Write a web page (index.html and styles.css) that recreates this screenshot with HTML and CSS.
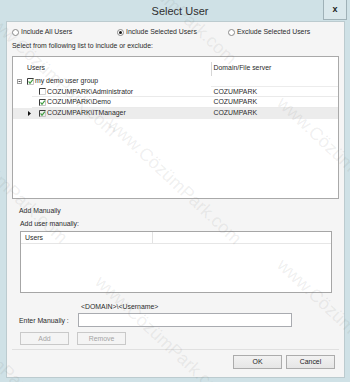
FILE: index.html
```html
<!DOCTYPE html>
<html>
<head>
<meta charset="utf-8">
<link rel="stylesheet" href="styles.css">
</head>
<body>
<div class="window">
  <div class="titlebar">
    <div class="title">Select User</div>
    <div class="close">x</div>
  </div>
  <div class="client">
    <div class="radios">
      <div class="radio"><span class="rb"></span>Include All Users</div>
      <div class="radio"><span class="rb on"></span>Include Selected Users</div>
      <div class="radio"><span class="rb"></span>Exclude Selected Users</div>
    </div>
    <div class="hint">Select from following list to include or exclude:</div>
    <div class="tree">
      <div class="thead">
        <div class="h1">Users</div>
        <div class="h2">Domain/File server</div>
      </div>
      <div class="trow r-group">
        <div class="cell1 lvl0">
          <svg class="exp" viewBox="0 0 5 5"><rect x="0.5" y="0.5" width="4" height="4" fill="#fff" stroke="#9c9c9c"/><path d="M1.5 2.5H3.5" stroke="#555"/></svg>
          <svg class="cb" viewBox="0 0 7 7"><path d="M0.5 7V0.5H7" stroke="#3a3a3a" fill="none"/><path d="M6.5 0.5V6.5H0.5" stroke="#c4c4c4" fill="none"/><path d="M1.6 3.4L3 5.3L5.8 1.6" stroke="#3c9a3c" stroke-width="1.1" fill="none"/></svg>
          <span>my demo user group</span>
        </div>
        <div class="cell2"></div>
      </div>
      <div class="trow r-line">
        <div class="cell1 lvl1">
          <svg class="cb" viewBox="0 0 7 7"><path d="M0.5 7V0.5H7" stroke="#3a3a3a" fill="none"/><path d="M6.5 0.5V6.5H0.5" stroke="#d0d0d0" fill="none"/></svg>
          <span>COZUMPARK\Administrator</span>
        </div>
        <div class="cell2">COZUMPARK</div>
      </div>
      <div class="trow r-line">
        <div class="cell1 lvl1">
          <svg class="cb" viewBox="0 0 7 7"><path d="M0.5 7V0.5H7" stroke="#3a3a3a" fill="none"/><path d="M6.5 0.5V6.5H0.5" stroke="#c4c4c4" fill="none"/><path d="M1.6 3.4L3 5.3L5.8 1.6" stroke="#3c9a3c" stroke-width="1.1" fill="none"/></svg>
          <span>COZUMPARK\Demo</span>
        </div>
        <div class="cell2">COZUMPARK</div>
      </div>
      <div class="trow r-sel">
        <div class="cell1 lvl1a">
          <svg class="arr" viewBox="0 0 3 5"><path d="M0 0L3 2.5L0 5Z" fill="#111"/></svg>
          <svg class="cb" viewBox="0 0 7 7"><path d="M0.5 7V0.5H7" stroke="#3a3a3a" fill="none"/><path d="M6.5 0.5V6.5H0.5" stroke="#c4c4c4" fill="none"/><path d="M1.6 3.4L3 5.3L5.8 1.6" stroke="#3c9a3c" stroke-width="1.1" fill="none"/></svg>
          <span>COZUMPARK\ITManager</span>
        </div>
        <div class="cell2">COZUMPARK</div>
      </div>
    </div>
    <div class="manual">
      <div class="lbl">Add Manually</div>
      <div class="lbl2">Add user manually:</div>
      <div class="ulist">
        <div class="uhead">
          <div class="u1">Users</div>
          <div class="u2"></div>
        </div>
      </div>
      <div class="fmt">&lt;DOMAIN&gt;\&lt;Username&gt;</div>
      <div class="enter">
        <span class="enter-lbl">Enter Manually :</span>
        <div class="input"></div>
      </div>
      <div class="btns">
        <button class="btn dis">Add</button>
        <button class="btn dis">Remove</button>
      </div>
    </div>
    <div class="sep"></div>
    <div class="footer">
      <button class="btn act">OK</button>
      <button class="btn act">Cancel</button>
    </div>
  </div>
</div>
<div class="wm-layer">
  <span class="wm wm1">www.CözümPark.com</span>
  <span class="wm wm2">www.CözümPark.com</span>
  <span class="wm wm3">www.CözümPark.com</span>
  <span class="wm wm4">www.CözümPark.com</span>
  <span class="wm wm5">www.CözümPark.com</span>
  <span class="wm wm6">www.CözümPark.com</span>
  <span class="wm wm7">www.CözümPark.com</span>
  <span class="wm wm8">www.CözümPark.com</span>
</div>
</body>
</html>
```
FILE: styles.css
```css
* { box-sizing: border-box; margin: 0; padding: 0; }
html, body { width: 350px; height: 382px; overflow: hidden; }
body {
  background: #cfe1e6;
  font-family: "Liberation Sans", Arial, sans-serif;
  font-size: 6.9px;
  color: #2a2a2a;
  position: relative;
}
.window { display: flex; flex-direction: column; height: 382px; }
.titlebar { height: 22px; display: flex; align-items: flex-start; }
.title {
  flex: 1;
  text-align: center;
  padding-left: 37px;
  font-size: 11px;
  line-height: 22px;
  color: #2e2e2e;
}
.close {
  width: 24px;
  height: 20px;
  margin-right: 3px;
  border: 1px solid #9fb1b7;
  border-top: none;
  background: #dae8ec;
  display: flex;
  align-items: center;
  justify-content: center;
  font-weight: bold;
  font-size: 9px;
  line-height: 1;
  color: #1e1e1e;
}
.client {
  flex: 1;
  margin: 0 6px 5px 7px;
  background: #f5f5f5;
  padding: 5px 5px 0 5px;
  display: flex;
  flex-direction: column;
  box-shadow: 0 0 0 1px #bccbcf;
}
.radios {
  display: grid;
  grid-template-columns: 105px 111px auto;
  height: 10px;
  line-height: 10px;
}
.radio { display: flex; align-items: center; }
.rb {
  width: 7px;
  height: 7px;
  border-radius: 50%;
  border: 1px solid #8a8a8a;
  background: #fff;
  margin-right: 2px;
  display: flex;
  align-items: center;
  justify-content: center;
}
.rb.on::after {
  content: "";
  width: 3px;
  height: 3px;
  border-radius: 50%;
  background: #1a1a1a;
}
.hint { margin-top: 4px; height: 10px; line-height: 10px; }
.tree {
  margin-top: 5px;
  height: 143px;
  border: 1px solid #a9a9a9;
  background: #fff;
}
.thead {
  display: grid;
  grid-template-columns: 198px 1fr;
  height: 19px;
}
.thead div { padding-top: 2px; line-height: 17px; }
.h1 { padding-left: 14px; }
.h2 {
  padding-left: 2.5px;
  background: linear-gradient(#d6d6d6, #d6d6d6) no-repeat 0 5px / 1px 14px;
}
.trow {
  display: grid;
  grid-template-columns: 198px 1fr;
  height: 10.67px;
  line-height: 10.67px;
}
.r-group {
  background: linear-gradient(#ececec, #ececec) no-repeat 198px 100% / calc(100% - 198px) 1px;
}
.r-line {
  background: linear-gradient(#eaeaea, #eaeaea) no-repeat 19px 100% / calc(100% - 19px) 1px;
}
.r-sel { background: #ececec; }
.cell1 { display: flex; align-items: center; white-space: nowrap; }
.cell2 { padding-left: 2.5px; white-space: nowrap; }
.lvl0 { padding-left: 4px; }
.lvl1 { padding-left: 26px; }
.lvl1a { padding-left: 15px; }
.exp { width: 5px; height: 5px; margin-right: 5px; flex: none; }
.cb { width: 7px; height: 7px; margin-right: 1px; flex: none; }
.arr { width: 3px; height: 5px; margin-right: 8px; flex: none; }
.manual { padding: 0 7px 0 8px; }
.lbl { margin-top: 7px; margin-left: -1px; height: 10px; line-height: 10px; }
.lbl2 { margin-top: 3px; height: 10px; line-height: 10px; }
.ulist {
  margin-top: 2px;
  height: 62px;
  border: 1px solid #a6a6a6;
  background: #fff;
}
.uhead {
  display: grid;
  grid-template-columns: 131px 1fr;
  height: 12px;
  border-bottom: 1px solid #e6e6e6;
  line-height: 11px;
}
.u1 { padding-left: 4px; }
.u2 { border-left: 1px solid #e2e2e2; }
.fmt { margin-top: 8.5px; height: 10px; line-height: 10px; padding-left: 61px; }
.enter { margin-top: 1.5px; display: flex; align-items: center; height: 14px; }
.enter-lbl { margin-left: -1px; width: 59px; flex: none; }
.input { width: 214px; height: 14px; border: 1px solid #a9abb0; background: #fff; }
.btns { margin-top: 5px; display: flex; gap: 8px; }
.btn {
  width: 49px;
  height: 13px;
  font-family: "Liberation Sans", Arial, sans-serif;
  font-size: 6.9px;
  line-height: 11px;
  text-align: center;
}
.dis { border: 1px solid #c9c9c9; background: #f4f4f4; color: #a4a4a4; }
.sep { margin-top: 4px; height: 1px; background: #e0e0e0; }
.footer {
  margin-top: 5px;
  display: flex;
  justify-content: flex-end;
  gap: 4px;
  padding-right: 4px;
}
.act {
  height: 14px;
  line-height: 12px;
  border: 1px solid #acacac;
  background: linear-gradient(#f2f2f2, #e6e6e6);
  color: #222;
}
.wm-layer {
  position: absolute;
  left: 0;
  top: 0;
  width: 350px;
  height: 382px;
  overflow: hidden;
  pointer-events: none;
}
.wm {
  position: absolute;
  font-family: "Liberation Sans", Arial, sans-serif;
  font-size: 18px;
  line-height: 20px;
  color: rgba(110, 110, 110, 0.11);
  white-space: nowrap;
  transform-origin: 0 50%;
  transform: rotate(43deg);
}
.wm1 { left: 110px; top: 111px; }
.wm2 { left: 280px; top: 90px; }
.wm3 { left: 98px; top: 269px; }
.wm4 { left: 280px; top: 252px; }
.wm5 { left: -64px; top: 110px; }
.wm6 { left: -70px; top: 290px; }
.wm7 { left: -14px; top: 3px; }
.wm8 { left: 105px; top: -69px; }
```
